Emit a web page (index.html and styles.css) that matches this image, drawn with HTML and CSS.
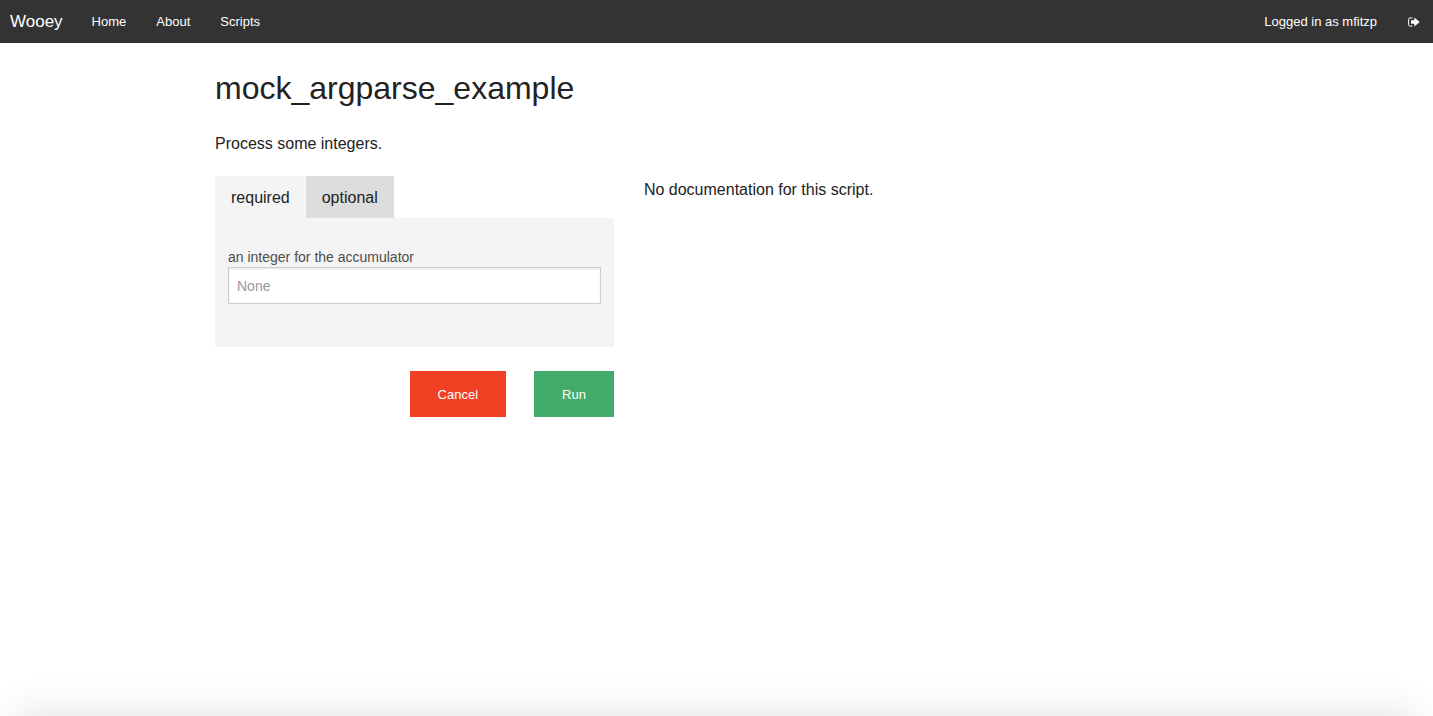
FILE: index.html
```html
<!DOCTYPE html>
<html lang="en">
<head>
<meta charset="utf-8">
<meta name="viewport" content="width=device-width, initial-scale=1">
<title>Wooey</title>
<link rel="stylesheet" href="styles.css">
</head>
<body>
<nav class="top-bar">
  <a class="brand" href="#">Wooey</a>
  <ul class="menu">
    <li><a href="#">Home</a></li>
    <li><a href="#">About</a></li>
    <li><a href="#">Scripts</a></li>
  </ul>
  <div class="session">
    <a href="#">Logged in as mfitzp</a>
    <a class="logout" href="#" aria-label="Log out">
      <svg width="12" height="10" viewBox="0 0 12 10" aria-hidden="true">
        <path d="M4.5 .9H2.2Q.6 .9 .6 2.3V7.7Q.6 9.1 2.2 9.1H4.5" fill="none" stroke="#fff" stroke-width="1"/>
        <path d="M3.3 3.3H6.3V1Q6.4 .5 6.9 .9L11.2 4.6Q11.6 5 11.2 5.4L6.9 9.1Q6.4 9.5 6.3 9V6.7H3.3Q3 6.7 3 6.3V3.7Q3 3.3 3.3 3.3Z" fill="#fff"/>
      </svg>
    </a>
  </div>
</nav>
<main class="page">
  <h1 class="title">mock_argparse_example</h1>
  <p class="description">Process some integers.</p>
  <div class="columns">
    <form class="script-form">
      <div class="tabs" role="tablist">
        <button class="tab tab-active" type="button" role="tab" aria-selected="true">required</button>
        <button class="tab" type="button" role="tab" aria-selected="false">optional</button>
      </div>
      <div class="panel">
        <label class="field-label" for="integers">an integer for the accumulator</label>
        <input class="field" id="integers" type="text" placeholder="None">
      </div>
      <div class="actions">
        <button class="button cancel" type="button">Cancel</button>
        <button class="button run" type="submit">Run</button>
      </div>
    </form>
    <p class="docs">No documentation for this script.</p>
  </div>
</main>
<div class="bottom-shadow"></div>
</body>
</html>
```
FILE: styles.css
```css
* {
  box-sizing: border-box;
}

body {
  margin: 0;
  background: #fff;
  color: #222;
  font-family: "Liberation Sans", Arial, sans-serif;
  font-size: 16px;
  line-height: 26px;
}

.top-bar {
  display: flex;
  align-items: center;
  height: 43px;
  padding: 0 13px 0 10px;
  background: #333;
  font-size: 13px;
}

.top-bar a {
  color: #fff;
  text-decoration: none;
}

.top-bar .brand {
  font-size: 17px;
}

.menu {
  display: flex;
  gap: 30px;
  margin: 0 0 0 29px;
  padding: 0;
  list-style: none;
}

.session {
  display: flex;
  align-items: center;
  gap: 31px;
  margin-left: auto;
}

.logout {
  display: flex;
}

.page {
  max-width: 1033px;
  margin: 0 auto;
  padding: 22px 15px;
}

.title {
  margin: 0 0 20px;
  font-size: 32px;
  font-weight: 400;
  line-height: 46px;
}

.description {
  margin: 0 0 19px;
}

.columns {
  display: grid;
  grid-template-columns: 41fr 59fr;
  gap: 30px;
}

.docs {
  margin: 0;
  padding-top: 1px;
}

.tabs {
  display: flex;
}

.tab {
  height: 42px;
  padding: 2px 16px 0;
  border: 0;
  background: #ddd;
  color: #222;
  font: inherit;
}

.tab-active {
  background: #f4f4f4;
}

.panel {
  padding: 29px 13px 43px;
  background: #f4f4f4;
}

.field-label {
  display: block;
  color: #4d4d4d;
  font-size: 14px;
  line-height: 20px;
}

.field {
  display: block;
  width: 100%;
  height: 37px;
  padding: 8px;
  border: 1px solid #ccc;
  border-radius: 0;
  background: #fff;
  box-shadow: inset 0 1px 2px rgba(0, 0, 0, 0.1);
  color: #222;
  font: inherit;
  font-size: 14px;
}

.field::placeholder {
  color: #999;
}

.actions {
  display: flex;
  justify-content: flex-end;
  gap: 28px;
  padding-top: 24px;
}

.button {
  height: 46px;
  padding: 2px 28px 0;
  border: 0;
  color: #fff;
  font: inherit;
  font-size: 13px;
}

.cancel {
  background: #f04124;
}

.run {
  background: #43ac6a;
}

.bottom-shadow {
  position: fixed;
  top: 100%;
  left: 16px;
  right: 16px;
  height: 80px;
  box-shadow: 0 0 44px rgba(0, 0, 0, 0.13);
}
```
